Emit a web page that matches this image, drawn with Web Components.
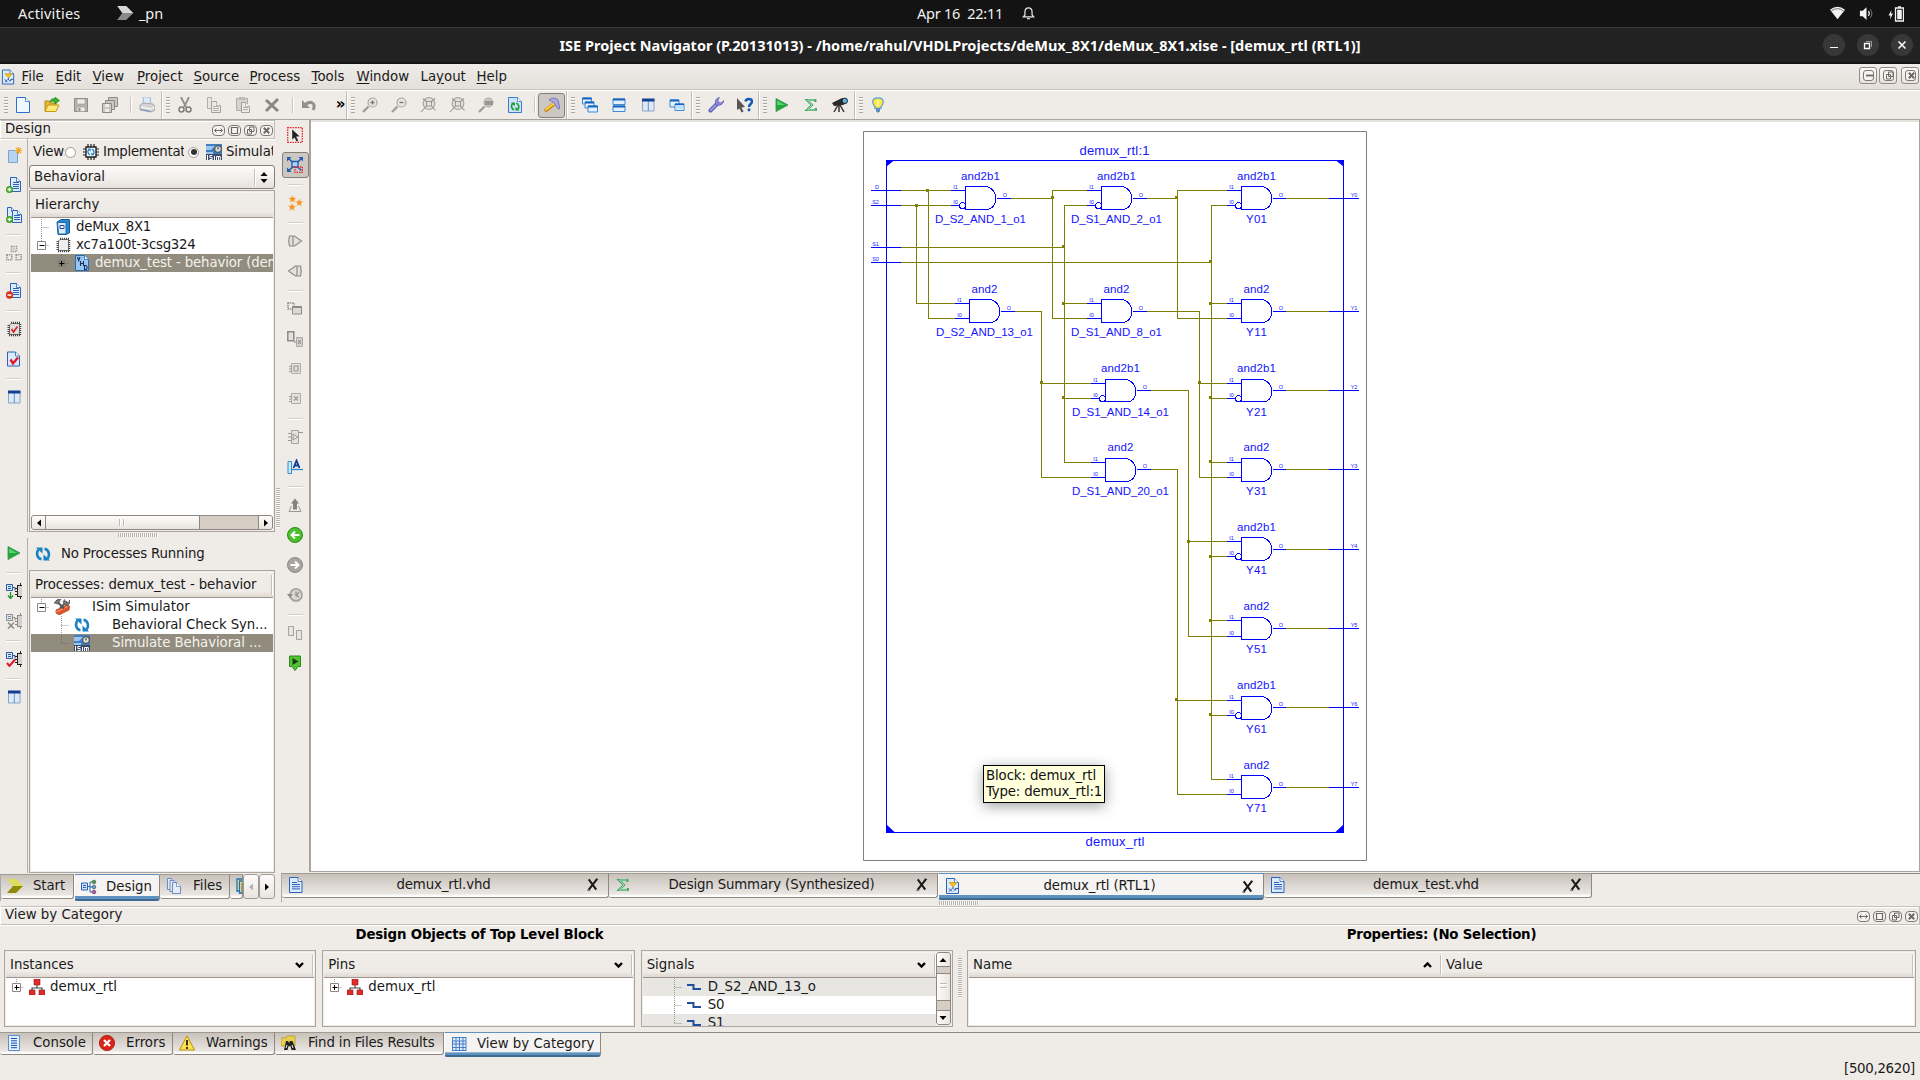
<!DOCTYPE html>
<html lang="en">
<head>
<meta charset="utf-8">
<title>ISE Project Navigator</title>
<style>
html,body{margin:0;height:100%;overflow:hidden;background:#efebe7}
body{font:13.33px/18px "DejaVu Sans",sans-serif;color:#1a1a1a}
</style>
</head>
<body>
<ise-app></ise-app>
<script>
const define = (name, html, init) => customElements.define(name, class extends HTMLElement {
  constructor() { super(); this.attachShadow({ mode: 'open' }); }
  connectedCallback() {
    this.shadowRoot.innerHTML = typeof html === 'function' ? html(this) : html;
    if (init) init(this);
  }
});

/* ---------- icon library, 16 x 16 grid ---------- */
const B = '#2a62b8', G = '#8e8b87';
const page = (x, y, w, h, s = B, f = '#dcebfb') => `<path d="M${x} ${y}h${w - 4}l4 4v${h - 4}h-${w}z" fill="${f}" stroke="${s}"/><path d="M${x + w - 4} ${y}v4h4" fill="#fff" stroke="${s}" stroke-width=".8"/>`;
const lines = (x, y, w, n, c = B, d = 2) => Array.from({ length: n }, (_, i) => `<path d="M${x} ${y + i * d}h${w}" stroke="${c}"/>`).join('');
const proc = (c) => `<path d="M.5 1.5h6v6h-6z" fill="#d8e8fa" stroke="${c}"/><path d="M2 3.5h3M2 5.5h3M7 4.5h2v3" stroke="${c}" fill="none"/><path d="M11 2.500h5M11 13.500h5M11.500 2v12M9 5.500h2M9 8.500h2M9 11.500h2M14.500 0v2M14.500 14v2" stroke="${c === G ? G : '#222'}" fill="none"/><path d="M12 3h4v10h-4z" fill="#d4d2d0"/>`;
const cyc = (c, t = '') => `<g ${t} fill="none" stroke="${c}" stroke-width="2.600"><path d="M6.500 13.200C2 12.500.8 7 3.500 3.500"/><path d="M9.500 2.800C14 3.500 15.200 9 12.500 12.500"/></g><g ${t} fill="${c}"><path d="M1 1.500h6.500v6z"/><path d="M15 14.500H8.500v-6z"/></g>`;
const lens = `<path d="M1 15l5.500-5.500" stroke="#a19e9a" stroke-width="2.400"/><circle cx="10.500" cy="5.500" r="4.500" fill="#e6e4e1" stroke="#aaa7a3" stroke-width="1.200"/>`;
const chip = (c, f = '#dedede') => `<path d="M5 2.500h8.500v11h-10V4z" fill="${f}" stroke="${c}" stroke-width=".7"/><path d="M5 1.800h9M3 14.200h11M2.500 4v10M14.300 3v11" fill="none" stroke="${c}" stroke-width="2" stroke-dasharray="1.100 .9"/>`;
const isim = `<path d="M0 0h16v11H0z" fill="#3f7fc4"/><path d="M0 2h9l-4 4H0zM0 8h7v2H0z" fill="#9cc6ee"/><circle cx="12" cy="5" r="3.300" fill="#ddd" stroke="#555" stroke-width="1.200"/><path d="M12 3v2.500" stroke="#333"/><path d="M0 10h16v6H0z" fill="#3a4a66"/><path d="M1.500 11v5M6.500 11.500H3.800v2h2.400v2H3.500M8.500 12v4M10.500 16v-3.500h3.800V16M12.500 12.500V16" stroke="#fff" fill="none"/>`;
const win = (x, y, w, h) => `<path d="M${x} ${y}h${w}v${h}h-${w}z" fill="#e4f0fc" stroke="#2a7fd0" stroke-width=".9"/><path d="M${x} ${y + .5}h${w}" stroke="#1565c0" stroke-width="2"/>`;
const gate = (c) => `<path d="M2.500 3h5L14.500 8l-7 5h-5q-1.500-5 0-10zM6 3.500v9" fill="#e3e1de" stroke="${c}" stroke-width="1.200"/>`;
const plusdot = `<circle cx="3.500" cy="12.500" r="3.500" fill="#36a41c"/><path d="M1.500 12.500h4M3.500 10.500v4" stroke="#fff" stroke-width="1.300"/>`;
const icons = {
  app: page(1.5, .5, 12, 15) + `<path d="M4 4.500h8L8 9z" fill="#f2c021" stroke="#c79000" stroke-width=".6"/><path d="M8 9v2M4 10.500l3 3M7 10.500l-3 3M8.500 12h2v-1.500h2.500" stroke="#2350a8" fill="none"/>`,
  new: page(1.500, .5, 13, 15, '#2f6fd0', '#f1f7fe'),
  open: `<path d="M1 14V4h4l1 2h6v8z" fill="#e0b83c" stroke="#b8860b"/><path d="M1 14.500L4 8h11l-3 6.500z" fill="#ffe97a" stroke="#c79a18"/><path d="M6 5c0-3 3-4 5-3V0l4.500 3.500L11 7V5C9 4 8 4 6 5z" fill="#35b02a" stroke="#1d7d17" stroke-width=".6"/>`,
  save: `<path d="M1.500 1.500h13v13h-13z" fill="#b6b3af" stroke="${G}"/><path d="M4 2h8v5H4zM4 10h8v4.500H4z" fill="#efebe7" stroke="#999" stroke-width=".6"/><path d="M5.500 11h2v3h-2z" fill="${G}"/>`,
  saveall: `<g fill="#cac7c3" stroke="${G}"><path d="M6.500.5h9v9h-9z"/><path d="M3.500 3.500h9v9h-9z"/><path d="M.5 6.500h9v9h-9z"/></g><path d="M3 7h4v3H3zM3 12h4v3H3z" fill="#efebe7"/>`,
  print: `<path d="M4 0h7l1 8H5z" fill="#dcebfb" stroke="#9fb8d8"/><path d="M1 8l3-2 10 1 2 2v4l-4 2-11-2z" fill="#d6d4d2" stroke="#aaa"/><path d="M2 10l10 2 3-1.500" stroke="#fff" fill="none"/><path d="M2 12.500l10 2" stroke="#6f9ad0"/>`,
  cut: `<path d="M4 0l5 10M12 0L7 10" stroke="#92908c" stroke-width="1.800"/><circle cx="4.500" cy="12.500" r="2.500" fill="none" stroke="#807d79" stroke-width="1.500"/><circle cx="11.500" cy="12.500" r="2.500" fill="none" stroke="#807d79" stroke-width="1.500"/>`,
  copy: page(1.500, .5, 8, 11, '#b0ada9', '#e8e6e3') + page(5.500, 4.500, 9, 11, '#a5a29e', '#eceae7') + lines(7, 9.500, 6, 3, '#b5b2ae'),
  paste: `<path d="M1.500 1.500h11v12h-11z" fill="#d5d2ce" stroke="#b0ada9"/><path d="M4 0h6v3H4z" fill="#c0bdb9"/>` + page(6.500, 5.500, 8, 10, '#a5a29e', '#eceae7') + lines(8, 10.500, 5, 2, '#b5b2ae'),
  del: `<path d="M2 3l12 11M14 2L2 14" stroke="#8b8884" stroke-width="3"/>`,
  undo: `<path d="M4 8c5-5 12-2 8 5" fill="none" stroke="#92908c" stroke-width="3"/><path d="M1 3v8h8z" fill="#92908c"/>`,
  zin: lens + `<path d="M8.500 5.500h4M10.500 3.500v4" stroke="#777" stroke-width="1.300"/>`,
  zout: lens + `<path d="M8.500 5.500h4" stroke="#777" stroke-width="1.300"/>`,
  fit: `<circle cx="9" cy="6.500" r="5.800" fill="#e4e2de" stroke="#aaa7a3" stroke-width="1.300"/><path d="M6.500 4.500h5v4.500h-5zM3 1.500l3.500 3M15 1.500l-3.500 3M1 15l5.500-6M15.500 13.500l-4-4.500" stroke="#9a9793" stroke-width="1.100" fill="none"/>`,
  zsel: `<path d="M1 15l5.500-5.500" stroke="#a19e9a" stroke-width="2.400"/><circle cx="10.500" cy="5.500" r="4.500" fill="#c9c6c2" stroke="#aaa7a3"/><path d="M7 4h8v4H7z" fill="#9a9793"/>`,
  refresh: page(1.500, .5, 13, 15, '#3b78cf', '#cfe4fb') + cyc('#189a2c', 'transform="translate(3.200 4.500) scale(.62)"'),
  hammer: `<path d="M1 14L10 7" stroke="#c8860a" stroke-width="3.600"/><path d="M1.500 13L10 6.500" stroke="#ffd24a" stroke-width="1.600"/><path d="M5 3c3-3 7-2 9 0l2 9-2.500-.5L11 7 9 5z" fill="#a9a8e0" stroke="#6c6ab0" stroke-width=".8"/>`,
  cascade: win(.5, 1, 9, 6) + win(3, 5, 9, 6) + win(6, 9, 9.500, 6),
  tileh: win(2, 2, 12, 5.500) + win(2, 9, 12, 5.500),
  tilev: `<path d="M2.500 2.500h11.500v11.500H2.500z" fill="#dfe9f5" stroke="#8aa5c8"/><path d="M8.300 3v11" stroke="#5f8fcf"/><path d="M2 1.500h12.500v3H2z" fill="#123f96"/>`,
  winr: win(1, 3, 9, 7) + win(6, 7, 9, 6.500) + `<path d="M6.500 8h8v4h-8z" fill="#bfe0fb"/>`,
  wrench: `<path d="M2.500 13.500L9 7" stroke="#5a58b4" stroke-width="4" stroke-linecap="round"/><path d="M2.700 13.300L9 7" stroke="#9a99e6" stroke-width="2" stroke-linecap="round"/><path d="M11.500.5C8 1 6.500 4 8 7.500c3.500 1.800 7 .5 7.800-4L13 6l-2.500-.5L10 3z" fill="#8a89dc" stroke="#5a58b4" stroke-width=".7"/>`,
  help: `<path d="M0 1l8 9-3.500.5 2 4-2 1-2-4L0 13z" fill="#555"/><path d="M8.500 4.500C9 1 15 1 15 4.500c0 2.500-3 2.500-3 5.500" fill="none" stroke="#1257b8" stroke-width="2.500"/><path d="M10.700 11.500h2.600v2.700h-2.600z" fill="#1257b8"/>`,
  play: `<path d="M2 1.500L14 8 2 14.500z" fill="#1faa3c" stroke="#3c8c4c" stroke-width=".8"/><path d="M3 3.500L11 8H3z" fill="#5fd070"/>`,
  sigma: `<path d="M12.300 5V3H4l5 5-5 5h8.800v-2" fill="none" stroke="#3fa563" stroke-width="2.200"/><path d="M11.800 3H4.500L9 8l-4.500 5h8" fill="none" stroke="#c4ecd0" stroke-width=".8"/>`,
  scope: `<path d="M0 6l10-5 4 1 1 4-4 2-9 1z" fill="#2b2b2b"/><circle cx="12.800" cy="3.800" r="2.700" fill="#54b7ea" stroke="#222"/><path d="M6 8l-4 7M7 8v7M8 8l4 7" stroke="#333" stroke-width="1.500"/>`,
  bulb: `<path d="M8 .8c7 0 6 6 3 9v1.500H5V9.800C2 6.800 1 .8 8 .8z" fill="#ffe73e" stroke="#4a9fe0" stroke-width="1.200"/><path d="M6 11h4v3.500L8 15.700 6 14.500z" fill="#5a8cc8"/><path d="M8 3v6" stroke="#fff8b0" stroke-width="2"/>`,
  newsrc: `<path d="M2.500 3.500h9v12h-9z" fill="#b8d4f2" stroke="#7da3d3"/><path d="M12.500 0v7M9 3.500h7M10 1l5 5M15 1l-5 5" stroke="#f5a623" stroke-width="1.200"/>`,
  addsrc: page(4.500, .5, 10, 14) + lines(7, 5.500, 6, 4) + plusdot,
  addcopy: page(1.500, .5, 8, 11) + page(6.500, 3.500, 9, 12) + lines(8, 8.500, 6, 3) + plusdot,
  remsrc: page(4.500, .5, 10, 14) + lines(7, 5.500, 6, 4) + `<circle cx="3.500" cy="12" r="3.700" fill="#d9301a"/><path d="M1.500 12h4" stroke="#fff" stroke-width="1.500"/>`,
  hier: `<g fill="none" stroke="#9a9793" stroke-width="1.600" stroke-dasharray="1.300 .8"><path d="M5.500 1.500h5v5h-5zM.8 9.800h5v5h-5zM10.200 9.800h5v5h-5z"/></g><path d="M7 3h2v2H7z" fill="#ccc"/>`,
  chipcheck: chip('#444') + `<path d="M5.500 8l2 3 4-5.500" stroke="#e02020" stroke-width="1.600" fill="none"/>`,
  chip: chip('#444', '#eee'),
  doccheck: page(1.500, 1, 12, 14, B) + `<path d="M4.500 8.500l2.500 4 5-6" stroke="#e0182a" stroke-width="2.400" fill="none"/>`,
  select: `<path d="M.7.7h14.600v14.600H.7z" fill="none" stroke="#e8222a" stroke-width="1.300" stroke-dasharray="1.500 1"/><path d="M5 2l8 7.500-3.500.3 2 4-2 1-2-4L5 13z" fill="#222" stroke="#fff" stroke-width=".4"/>`,
  zoomfit: `<path d="M1.500 1.500l13 12M14.500 1.500l-13 12.500" stroke="#1f5bb0" stroke-width="1.500"/><path d="M5 4.500h6v5.500H5z" fill="#b5d2f3" stroke="#1f5bb0" stroke-width="1.300"/><path d="M0 0h4.500L0 4.500zM16 0v4.500L11.500 0zM0 15v-4.500L4.500 15z" fill="#1f5bb0"/><path d="M8 10h7.500v5.500H8z" fill="none" stroke="#e8222a" stroke-width="1.300" stroke-dasharray="1.500 1"/>`,
  stars: `<g fill="#f79421" stroke="#fbc27c" stroke-width=".4"><path d="M5.500.5l1.100 2.300 2.500.3-1.900 1.700.5 2.600-2.200-1.300-2.300 1.300.5-2.600L1.800 3.100l2.600-.3z"/><path d="M12.300 4l1.100 2.300 2.500.3-1.900 1.700.5 2.600-2.200-1.300-2.300 1.300.5-2.600-1.900-1.700 2.600-.3z"/><path d="M5 8.500l1.100 2.300 2.500.3-1.900 1.700.5 2.600L5 14.100l-2.300 1.300.5-2.600-1.900-1.700 2.600-.3z"/></g>`,
  gatef: gate(G),
  gateb: `<g transform="matrix(-1 0 0 1 16 0)">${gate(G)}</g>`,
  winchip: `<path d="M1 2h6v6H1z" fill="none" stroke="${G}" stroke-width="1.600" stroke-dasharray="1.300 .8"/><path d="M5.500 5.500h9v7.500h-9z" fill="#dedbd7" stroke="${G}"/><path d="M5.500 6h9" stroke="${G}" stroke-width="2"/>`,
  boxchip: `<path d="M.8.800h6v9h-6z" fill="#e4e2df" stroke="${G}" stroke-width="1.500"/><path d="M9.500 6.500h6v9h-6z" fill="#d4d1cd" stroke="#aaa"/><path d="M11 9l3 4M14 9l-3 4M7 11h2" stroke="${G}"/>`,
  port: `<path d="M4.500 2.500h9v10h-9z" fill="#e4e2df" stroke="#b0ada9"/><path d="M7 5h4v5H7zM2 5.500h3M2 8h3M2 10.500h3" fill="none" stroke="#9a9793" stroke-width="1.200"/>`,
  portx: `<path d="M4.500 2.500h9v10h-9z" fill="#e4e2df" stroke="#b0ada9"/><path d="M7 5.500l4 4M11 5.500l-4 4M2 5.500h3M2 8h3M2 10.500h3" fill="none" stroke="#9a9793" stroke-width="1.200"/>`,
  buf: `<path d="M4.500 1.500h7v13h-7z" fill="#e4e2df" stroke="#a5a29e"/><path d="M6 5l5 3-5 3zM1 4.500h3M1 8h3M1 11.500h3M12 3.500h4" fill="none" stroke="#9a9793"/>`,
  label: `<path d="M1 2.500h3.500v12H1z" fill="#cfe8fc" stroke="#2a8fd8"/><path d="M5 10.500h11" stroke="#2a8fd8" stroke-width="1.300"/><path d="M6.500 9L9.500 1.500 12.500 9M7.500 6.500h4" stroke="#123f96" stroke-width="1.800" fill="none"/>`,
  up: `<path d="M8 1.500l4 5h-2v6H6v-6H4z" fill="#85827d"/><path d="M4.500 9L2 14.500h12L11.500 9" fill="none" stroke="#9a9793"/>`,
  prev: `<circle cx="8" cy="8" r="7.500" fill="#4cc02c" stroke="#2c8a1a"/><path d="M12.500 8H5M8 4.500L4.500 8 8 11.500" stroke="#fff" stroke-width="2" fill="none"/>`,
  next: `<circle cx="8" cy="8" r="7.500" fill="#a8a5a1" stroke="#8b8884"/><path d="M3.500 8H11M8 4.500L11.500 8 8 11.500" stroke="#fff" stroke-width="2" fill="none"/>`,
  hist: `<circle cx="9" cy="8" r="6" fill="#dad7d3" stroke="#a8a5a1" stroke-width="1.800"/><path d="M0 7h6l-3 4z" fill="${G}"/><path d="M9 4.500V8.500L12 10M12 5l-2 3" stroke="${G}" stroke-width="1.300" fill="none"/>`,
  two: `<path d="M1.500 1.500h5v9h-5zM9.500 5.500h5v9h-5z" fill="#e8e6e3" stroke="#a5a29e"/>`,
  mark: `<path d="M2.500 1h11v10.500H11L8 15.500 5 11.500H2.500z" fill="#52c433" stroke="#2c8a1a"/><path d="M5.500 3l6 3.500-6 3.500z" fill="#1a3a14"/>`,
  procrun: proc('#2a5aa0') + `<path d="M4.500 9v6M2 12.500l2.500 3 2.500-3" stroke="#1c9a2c" stroke-width="1.300" fill="none"/>`,
  procstop: proc(G) + `<path d="M2 9.500l6 6M8 9.500l-6 6" stroke="${G}" stroke-width="1.600"/>`,
  proccheck: proc('#2a5aa0') + `<path d="M1 12l2.500 3L9 8.500" stroke="#e0182a" stroke-width="2" fill="none"/>`,
  impl: `<path d="M3 3h10v10H3z" fill="#fff" stroke="#222" stroke-width="1.400"/><path d="M5 0v3M8 0v3M11 0v3M5 13v3M8 13v3M11 13v3M0 5h3M0 8h3M0 11h3M13 5h3M13 8h3M13 11h3" stroke="#222" stroke-width="1.200"/>` + cyc('#1a86c8', 'transform="translate(3.800 3.800) scale(.52)"'),
  isim,
  proj: `<path d="M2 3l4-2.500h8.500V14L11 15.500H3z" fill="#2a86c8" stroke="#1a5f9c"/><path d="M2.500 3.500H11V15H3.500z" fill="#d9ecfa" stroke="#1a6fb0"/><path d="M5 6.500h4v3H5z" fill="#fff" stroke="#2a4aa0"/>`,
  vhd: page(1.500, .5, 13, 15, '#1a6fc0', '#9cc6f0') + `<path d="M3.500 2l1.200 3.500L6 2M6.500 6v5M9.500 6v5M6.500 8.500h3M10.500 10.500v4h1.500c1.500 0 1.500-4 0-4z" stroke="#12305c" stroke-width="1.100" fill="none"/>`,
  cyc: cyc('#1a80c4'),
  tools: `<path d="M2 11l11-5 2.500 1-.5 4L5 16l-3-2z" fill="#e2552c" stroke="#a83a1a" stroke-width=".7"/><path d="M2 13l12-5.500" stroke="#f59a78"/><path d="M2 1.500l8 8M13 2.500L6 9" stroke="#555" stroke-width="1.800"/><path d="M0 4l4-4h3L4 5zM10.500.5l1 2.500 3 1 1-3 .5 3-2.500 2.500-3-1L9 3z" fill="#777" stroke="#444" stroke-width=".6"/>`,
  start: `<path d="M0 1h9l7 7H6z" fill="#dede5a"/><path d="M0 15h9l7-7H6z" fill="#8c8c08"/>`,
  design: `<path d="M.5 4h6v7h-6z" fill="#cfe2fa" stroke="${B}"/><path d="M2 6.500h3M2 8.500h3M6.500 7.500h2.500M9 3v10M9 3h2M9 13h2M9 8h2" stroke="${B}" fill="none"/><circle cx="13" cy="3" r="1.800" fill="#45b04a" stroke="#333" stroke-width=".6"/><circle cx="13" cy="8" r="1.800" fill="#59a9e8" stroke="#333" stroke-width=".6"/><circle cx="13" cy="13" r="1.800" fill="#c255b8" stroke="#333" stroke-width=".6"/>`,
  files: page(1.500, .5, 8, 11, '#6a8cc0', '#e4ecf6') + page(4, 2.500, 8, 11, '#6a8cc0', '#e4ecf6') + page(6.500, 4.500, 8, 11, '#6a8cc0', '#e4ecf6'),
  libs: `<path d="M1 1h10v12H1z" fill="#ffe670" stroke="#1a6fc0" stroke-width="1.300"/><path d="M3.500 3h10v12h-10z" fill="#ffe670" stroke="#1a6fc0" stroke-width="1.300"/><path d="M6 5h9v11H6z" fill="#dcebfb" stroke="#1a6fc0"/>`,
  doc: page(1.500, .5, 12.500, 15) + lines(4, 5.500, 5, 1) + lines(4, 7.500, 8, 3, B, 2.200),
  mod: `<path d="M5 0h6v6H5zM0 11h6v5H0zM10 11h6v5h-6z" fill="#e02b2b" stroke="#a01414" stroke-width=".6"/><path d="M8 6v3M3 11V9h10v2" stroke="#444" fill="none" stroke-width="1.200"/>`,
  net: `<path d="M0 6h6.500v4h7.500" stroke="#1f4f9c" stroke-width="2" fill="none"/>`,
  console: `<path d="M2.500.5h11v15h-11z" fill="#e4f0fc" stroke="#5a8fd0"/>` + lines(5, 3.500, 6, 5, '#1f4fb0', 2.300),
  error: `<circle cx="8" cy="8" r="7.600" fill="#dc2418" stroke="#a01408" stroke-width=".8"/><path d="M5 5l6 6M11 5l-6 6" stroke="#fff" stroke-width="2.300"/>`,
  warn: `<path d="M8 .8L15.500 15H.5z" fill="#ffe24a" stroke="#b89010"/><path d="M8 5v5.500M8 12v2" stroke="#222" stroke-width="1.800"/>`,
  find: `<path d="M0 3h5l1-2h8v10H0z" fill="#e8cf50" stroke="#b59a20" stroke-width=".8"/><path d="M3 15l2-9h2l1 2 1-2h2.500L15 15h-4.500l-1-4h-2L6.500 15z" fill="#222"/><path d="M5 13l1-3M12 13l-1-3" stroke="#eee"/>`,
  grid: `<path d="M1 1.500h14v13H1z" fill="#dcebfc"/><path d="M1.500 1v14M5 1v14M8.500 1v14M12 1v14M15 1v14M1 1.500h14M1 5h14M1 8h14M1 11.500h14M1 14.500h14" stroke="#3f74c4" stroke-width=".9"/>`,
  pn: `<path d="M0 0h9l7 7H5z" fill="#d8d8d8"/><path d="M0 14h9l7-7H5z" fill="#8a8a8a"/>`,
  bell: `<path d="M2.500 11.500h11l-1.700-2V6.500C11.800 3 10 2 8 2S4.200 3 4.200 6.500v3zM6.500 13.500h3" fill="none" stroke="#e8e8e8" stroke-width="1.300"/>`,
  wifi: `<path d="M0 4q8-6.500 16 0L8 14z" fill="#f2f2f2"/><path d="M1.500 5.200q6.500-4.700 13 0" fill="none" stroke="#555" stroke-width=".9"/>`,
  vol: `<path d="M1 5h3l4-3.800v13.600L4 11H1z" fill="#f2f2f2"/><path d="M10 5.500q2 2.500 0 5" stroke="#eee" fill="none" stroke-width="1.300"/><path d="M12 3.500q3.500 4.500 0 9" stroke="#888" fill="none"/>`,
  batt: `<path d="M7.500 2h8v13h-8z" fill="none" stroke="#f2f2f2" stroke-width="1.300"/><path d="M10 .3h3v1.700h-3zM9.200 3.700h4.600v9.600H9.200z" fill="#f2f2f2"/><path d="M3.500 4L.5 9.500h2l-.5 4L5 7.500H3z" fill="#f2f2f2"/>`,
  close: `<path d="M4 2.500l8 11M13 2L4 13.500" stroke="#1a1a1a" stroke-width="2.200"/><path d="M2.500 14h3M11 2.500h3" stroke="#333"/>`
};
icons.table = icons.tilev;
define('ise-icon', el => `<style>:host{display:block;flex:none;width:16px;height:16px}svg{display:block;width:100%;height:100%}</style><svg viewBox="0 0 16 16">${icons[el.getAttribute('name')] || ''}</svg>`);

/* text run justified to a given advance width */
define('fit-text', `<style>:host{display:inline-block;white-space:pre}</style><span><slot></slot></span>`, el => {
  const w = +el.getAttribute('w'), n = el.textContent.length;
  const now = el.shadowRoot.querySelector('span').getBoundingClientRect().width;
  if (w && now) el.style.letterSpacing = ((w - now) / n).toFixed(3) + 'px';
});
const T = (w, s) => `<fit-text w="${w}">${s}</fit-text>`;

/* ---------- desktop chrome ---------- */
define('top-bar', `<style>
:host{display:grid;grid-template-columns:1fr 126px 1fr;height:27px;background:#131313;color:#f0f0f0;font:14.500px/26px "Noto Sans","Open Sans",sans-serif;box-sizing:border-box}
.l,.c,.r{display:flex;align-items:center}fit-text{margin-top:-2px}.l{padding-left:18px}.r{justify-content:flex-end;gap:14px;padding-right:16px}
.l ise-icon{width:16.500px;height:16px;margin:0 6px 0 36px}.c{gap:18px;padding-left:20px}.c ise-icon{width:15px;height:15px}
.r ise-icon{width:15px;height:15px}
</style><div class="l">${T(62.5, 'Activities')}<ise-icon name="pn"></ise-icon>${T(24, '_pn')}</div>
<div class="c">${T(86, 'Apr 16  22:11')}<ise-icon name="bell"></ise-icon></div>
<div class="r"><ise-icon name="wifi"></ise-icon><ise-icon name="vol"></ise-icon><ise-icon name="batt" style="width:16px;height:16px"></ise-icon></div>`);

define('title-bar', `<style>
:host{display:flex;align-items:center;position:relative;height:37px;box-sizing:border-box;border-top:1px solid #3a3a3a;border-bottom:2px solid #141414;background:#222;color:#fff;font:bold 14.500px/34px "Noto Sans","Open Sans",sans-serif}
.t{flex:1;text-align:center;padding-left:157px}.b{display:flex;gap:12px;padding-right:7px;width:150px;justify-content:flex-end}
i{width:22px;height:22px;border-radius:11px;background:#383838;display:grid;place-items:center}svg{width:10px;height:10px;fill:none;stroke:#fff}
</style><div class="t">${T(801, 'ISE Project Navigator (P.20131013) - /home/rahul/VHDLProjects/deMux_8X1/deMux_8X1.xise - [demux_rtl (RTL1)]')}</div>
<div class="b"><i><svg viewBox="0 0 10 10"><path d="M1 7.500h8"/></svg></i><i><svg viewBox="0 0 10 10"><path d="M1.500 3.500h5v5h-5z" stroke-width="1.300"/><path d="M3 1.500h5.500V7" stroke="#999"/></svg></i><i><svg viewBox="0 0 10 10"><path d="M1.500 1.500l7 7M8.500 1.500l-7 7" stroke-width="1.500"/></svg></i></div>`);

const glyph = {
  min: '<path d="M2 5.500h7" stroke-width="1.800"/>',
  span: '<path d="M1.500 5.500h8M3.500 3.500l-2 2 2 2M7.500 3.500l2 2-2 2"/>',
  max: '<path d="M2.500 2.500h6v6h-6z" stroke-width="1.200"/>',
  rest: '<path d="M4.500 2h4.500v4.500H4.500zM2.500 4.500h4V9h-4z"/>',
  x: '<path d="M2.800 2.800l5.400 5.400M8.200 2.800L2.800 8.200" stroke-width="2"/>'
};
define('round-btn', el => `<style>:host{display:block;flex:none;width:11px;height:9px;border:1px solid #7d7873;border-radius:4px;background:#f6f4f2}svg{display:block;width:11px;height:9px;fill:none;stroke:#6d6863}</style><svg viewBox="0 1 11 9">${glyph[el.getAttribute('g')]}</svg>`);

define('menu-bar', `<style>
:host{display:flex;height:26px;box-sizing:border-box;border-bottom:1px solid #c9c5c1;background:linear-gradient(#efede9,#e3dfda);align-items:center;padding:0 1px}
ise-icon{margin-right:5.500px;width:15px}nav{display:flex;flex:1}span{display:block;white-space:nowrap;line-height:22px;padding-top:1px}u{text-underline-offset:2px}
.b{display:flex;gap:2px;margin-top:-3px}.b i:last-child{margin-left:2px}.b i{width:16px;height:15px;border:1px solid #948c86;border-radius:3px;display:grid;place-items:center;background:linear-gradient(#fbfaf9,#e8e2dd)}
round-btn{width:9px;border-radius:3px}
</style><ise-icon name="app"></ise-icon><nav>${[['<u>F</u>ile', 34], ['<u>E</u>dit', 37], ['<u>V</u>iew', 44.500], ['<u>P</u>roject', 56.500], ['<u>S</u>ource', 56], ['<u>P</u>rocess', 62], ['<u>T</u>ools', 45], ['<u>W</u>indow', 64], ['La<u>y</u>out', 56], ['<u>H</u>elp', 40]].map(([t, w]) => `<span style="width:${w}px">${t}</span>`).join('')}</nav>
<div class="b"><i><round-btn g="min"></round-btn></i><i><round-btn g="rest"></round-btn></i><i><round-btn g="x"></round-btn></i></div>`);

define('tool-bar', `<style>
:host{display:flex;height:30px;box-sizing:border-box;border-top:1px solid #fff;border-bottom:1px solid #aaa49e}
.g{display:flex;align-items:center;box-sizing:border-box;border-right:1px solid #c2bcb6;box-shadow:1px 0 #fff;flex:none}.g>*{flex:none}
.h{width:4px;height:16px;margin:0 .5px 0 4px;background:repeating-linear-gradient(#aaa6a2 0 1px,#fbfaf9 1px 2px,#efebe7 2px 3px)}
.b{width:29px;display:grid;place-items:center}.b.on{width:25px;height:23px;margin:0 0 0 1px;border:1px solid #857f79;border-radius:3px;background:#cdc7c1}
.s{width:1px;height:16px;margin:0 2px 0 5px;background:#c9c5c1;box-shadow:1px 0 #fff}.m{margin-left:11px;font-weight:bold;font-size:15px;width:12px;text-align:center;color:#000;line-height:16px;margin-top:-2px}
</style>${[[162, 'new open save saveall | print'], [184.5, 'cut copy paste del | undo »'], [220.5, 'zin zout fit fit zsel refresh | *hammer'], [124.5, 'cascade tileh tilev winr'], [67, 'wrench help', 1.5], [96.5, 'play sigma scope']].map(([w, s, lead = 0]) => `<div class="g" style="width:${w}px"><div class="h" style="margin-right:${.5 + lead}px"></div>` + s.split(' ').map(n => n === '|' ? '<div class="s"></div>' : n === '»' ? '<div class="m">»</div>' : `<div class="b${n[0] === '*' ? ' on' : ''}"><ise-icon name="${n.replace('*', '')}"></ise-icon></div>`).join('') + '</div>').join('')}<div class="g" style="border:0;box-shadow:none"><div class="h"></div><div class="b"><ise-icon name="bulb"></ise-icon></div></div>`);

/* vertical icon strip; "|" is a separator, "*" marks a pressed button */
define('icon-strip', el => `<style>:host{display:flex;flex-direction:column;align-items:center;box-sizing:border-box}
.b{height:30px;display:grid;place-items:center;flex:none}.on{height:24px;width:25px;margin:2px 0;border:1px solid #857f79;border-radius:3px;background:#cdc7c1}
.s{height:1px;width:15px;margin:4px 0 2px;border-top:1px solid #d3cfcb;background:#fff;flex:none}</style>
${el.getAttribute('icons').split(' ').map(n => n === '|' ? '<div class="s"></div>' : `<div class="b${n[0] === '*' ? ' on' : ''}"><ise-icon name="${n.replace('*', '')}"></ise-icon></div>`).join('')}`);

define('dock-title', `<style>:host{display:flex;align-items:center;justify-content:space-between;box-sizing:border-box;height:19px;border:1px solid #c4bfba;border-left-color:#fff;padding:0 0 0 4px;box-shadow:inset 0 1px #fff,0 1px #fff}
.b{display:flex;gap:3px;padding-right:1px;padding-top:1px}span{line-height:16px;margin-top:-2px}</style><span><slot></slot></span><div class="b"><round-btn g="span"></round-btn><round-btn g="max"></round-btn><round-btn g="rest"></round-btn><round-btn g="x"></round-btn></div>`);

define('col-head', el => `<style>:host{display:flex;align-items:center;height:26px;box-sizing:border-box;border-bottom:1px solid #9c948e;background:linear-gradient(#efebe7 78%,#dfd8d2);padding-left:4px;box-shadow:inset 0 1px #f6f4f2}
span{flex:1;white-space:nowrap}i{width:1px;height:20px;background:#c4bfba;box-shadow:1px 0 #fff;margin-right:1px}svg{width:9px;height:8px;margin-right:8px}</style>
<span><slot></slot></span>${el.hasAttribute('arrow') ? `<svg viewBox="0 0 9 8"><path d="${el.getAttribute('arrow') === 'up' ? 'M1 6l3.500-3.500L8 6' : 'M1 2l3.500 3.500L8 2'}" fill="none" stroke="#000" stroke-width="2.400"/></svg>` : ''}${el.hasAttribute('nodiv') ? '' : '<i></i>'}`);

/* tree row: branch art occupies "indent" pixels before the icon */
define('tree-row', el => {
  const x = +el.getAttribute('x'), box = el.getAttribute('box'), ind = +el.getAttribute('indent'), up = el.getAttribute('up') ?? 1, down = el.hasAttribute('down');
  const tone = el.hasAttribute('sel') ? '#6f6b60' : '#9c9894';
  return `<style>:host{display:flex;height:18px;align-items:center;white-space:nowrap;overflow:hidden}
:host([sel]){background:#918c7d;color:#f4f2ee}:host([alt]){background:#e8e6e3}svg{flex:none;height:18px;width:${ind}px}span{margin-left:${el.getAttribute('gap') || 5}px;line-height:18px}</style>
<svg viewBox="0 0 ${ind} 18"><path d="M${x + .5} ${up}V${down ? 18 : 9}M${x + .5} 9.500h8" stroke="${tone}" stroke-dasharray="1 1" fill="none"/>${box ? `<path d="M${x - 3.5} 5.500h8v8h-8z" fill="${el.hasAttribute('sel') ? '#857f72' : '#fff'}" stroke="#8b8884"/><path d="M${x - 1.500} 9.500h5${box === 'plus' ? `M${x + .5} 7v5` : ''}" stroke="#000" fill="none"/>` : ''}</svg><ise-icon name="${el.getAttribute('icon')}"></ise-icon><span><slot></slot></span>`;
});

define('list-frame', `<style>:host{display:flex;flex-direction:column;box-sizing:border-box;border:1px solid #aca59f;background:#fff;overflow:hidden;box-shadow:inset 0 0 0 1px #efebe7;padding:1px}</style><slot></slot>`);

const arrow = (d, c = '#000') => `<svg viewBox="0 0 8 8" style="width:8px;height:8px;display:block"><path d="${{ l: 'M6 .5L2 4l4 3.500z', r: 'M2 .5L6 4 2 7.500z', u: 'M.5 6L4 2l3.500 4z', d: 'M.5 2L4 6l3.500-4z' }[d]}" fill="${c}"/></svg>`;
define('h-scroll', `<style>:host{display:flex;height:15px;box-sizing:border-box;border:1px solid #8f8882;border-radius:3px;background:#d6cdc5;overflow:hidden}
div{background:linear-gradient(#fdfcfb,#e9e4df);display:grid;place-items:center}.a{width:13px}.k{width:153px;border:solid #8f8882;border-width:0 1px}.r{border-left:1px solid #8f8882;margin-left:auto}
b{width:8px;height:7px;background:repeating-linear-gradient(90deg,#bbb 0 1px,#fff 1px 2px,transparent 2px 4px)}</style><div class="a">${arrow('l')}</div><div class="k"><b></b></div><div class="a r">${arrow('r')}</div>`);
define('v-scroll', `<style>:host{display:flex;flex-direction:column;width:15px;box-sizing:border-box;border:1px solid #8f8882;border-radius:3px;background:#d6cdc5;overflow:hidden}
div{background:linear-gradient(90deg,#fdfcfb,#e9e4df);display:grid;place-items:center}.a{height:13px}.k{height:26px;margin-top:6px;border:solid #8f8882;border-width:1px 0}.u{border-bottom:1px solid #8f8882}.r{border-top:1px solid #8f8882;margin-top:auto}
b{width:7px;height:8px;background:repeating-linear-gradient(#bbb 0 1px,#fff 1px 2px,transparent 2px 4px)}</style><div class="a u">${arrow('u')}</div><div class="k"><b></b></div><div class="a r">${arrow('d')}</div>`);

/* ---------- tabs ---------- */
define('tab-item', el => {
  const x = el.getAttribute('tx');
  return `<style>:host{display:flex;align-items:center;box-sizing:border-box;flex:none;height:25px;width:${el.getAttribute('w')}px;border:1px solid #8f8882;border-left:0;border-top-color:#a09a94;border-radius:0 0 3px 3px;background:linear-gradient(#c9c2bb,#e9e5e1 85%,#fff 95%);padding:0 0 2px 6px;overflow:hidden}
:host([sel]){height:27px;border-top-color:transparent;border-left:1px solid #fff;border-bottom:2px solid #3f6a92;background:linear-gradient(#f6f4f2 88%,#5e92c0 89%);padding-bottom:0}
span{white-space:nowrap;${x ? `margin-left:${x}px` : 'flex:1;text-align:center;margin-right:2px'}}ise-icon.x{width:15px;height:15px;margin-right:8px}</style>
<ise-icon name="${el.getAttribute('icon')}"></ise-icon><span><slot></slot></span>${el.hasAttribute('closable') ? '<ise-icon class="x" name="close"></ise-icon>' : ''}`;
});

/* ---------- RTL schematic ---------- */
define('rtl-schematic', () => {
  const out = [];
  const wire = (d, c = '#808000') => out.push(`<path d="${d}" stroke="${c}" fill="none" shape-rendering="crispEdges"/>`);
  const dot = (x, y) => out.push(`<rect x="${x - 1.5}" y="${y - 1.500}" width="3" height="3" fill="#808000"/>`);
  const text = (x, y, s, w, fs = 11.5) => out.push(`<text x="${x}" y="${y}" font-size="${fs}" text-anchor="middle"${w ? ` textLength="${w}"` : ''}>${s}</text>`);
  wire('M901 190.500H951M928.500 190.500V318.500H955M901 205.500H951M916.500 205.500V303.500H955');
  wire('M901 247.500H1065M1064.500 205V462.500H1091M1064.500 205.500H1087M1064.500 303.500H1087M1064.500 398.500H1091');
  wire('M1011 198.500H1053M1087 190.500H1052.500V318.500H1087M1015 311.500H1041.500V477.500H1091M1041.500 383.500H1091');
  wire('M901 262.500H1212M1227 205.500H1211.500V779.500H1227M1211 303.500H1227M1211 398.500H1227M1211 462.500H1227M1211 556.500H1227M1211 620.500H1227M1211 715.500H1227');
  wire('M1147 198.500H1178M1227 190.500H1177.500V318.500H1227M1147 311.500H1199.500V477.500H1227M1199.500 383.500H1227');
  wire('M1150 390.500H1188.500V636.500H1227M1188.500 541.500H1227M1150 469.500H1177.500V794.500H1227M1177.500 700.500H1227');
  [[927.5, 190.5], [916.5, 205.5], [1063.5, 246.5], [1063.5, 303.5], [1063.5, 397.5], [1052.5, 197.5], [1041.5, 382.5], [1210.5, 261.5], [1210.5, 303.5], [1210.5, 397.5], [1210.5, 461.5], [1210.5, 556.5], [1210.5, 620.5], [1210.5, 714.5], [1176.5, 197.5], [1199.5, 382.5], [1188.5, 541.5], [1176.5, 699.5]].forEach(p => dot(...p));
  [['D', 190.5], ['S2', 205.5], ['S1', 247.5], ['S0', 262.5]].forEach(([n, y]) => { wire(`M871 ${y}H901`, '#00f'); text(n === 'D' ? 877 : 875.5, y - 1.500, n, 0, 5.500); });
  /* left edge, output y, top, bottom, upper input, lower input, inverted, name, name width */
  [[965.5, 198.5, -12, 11, -8, 7, 1, 'D_S2_AND_1_o1', 91], [969.5, 311.5, -12, 11, -8, 7, 0, 'D_S2_AND_13_o1', 97], [1101.5, 198.5, -12, 11, -8, 7, 1, 'D_S1_AND_2_o1', 91], [1101.5, 311.5, -12, 11, -8, 7, 0, 'D_S1_AND_8_o1', 91], [1105.5, 390.5, -11, 11, -7, 8, 1, 'D_S1_AND_14_o1', 97], [1105.5, 469.5, -11, 12, -7, 8, 0, 'D_S1_AND_20_o1', 97],
   [1241.5, 198.5, -12, 11, -8, 7, 1, 'Y01'], [1241.5, 311.5, -12, 11, -8, 7, 0, 'Y11'], [1241.5, 390.5, -11, 11, -7, 8, 1, 'Y21'], [1241.5, 469.5, -11, 12, -7, 8, 0, 'Y31'], [1241.5, 549.5, -12, 11, -8, 7, 1, 'Y41'], [1241.5, 628.5, -11, 11, -8, 8, 0, 'Y51'], [1241.5, 707.5, -11, 12, -7, 8, 1, 'Y61'], [1241.5, 787.5, -12, 11, -8, 7, 0, 'Y71']
  ].forEach(([x, y, t, b, i1, i0, inv, name, w]) => {
    out.push(`<path d="M${x} ${y + t}h20.500q6 1 8.500 6.500q1.500 3 1.500 5.500q0 2.500-1.500 5.500q-2.500 5.500-8.500 ${b - t - 17.5}h-20.500z" fill="#fff" stroke="#00f" shape-rendering="crispEdges"/>`);
    wire(`M${x - 14.500} ${y + i1}H${x}M${x - 14.500} ${y + i0}H${inv ? x - 6 : x}M${x + 31} ${y}H${x + 45}`, '#00f');
    if (inv) out.push(`<circle cx="${x - 3}" cy="${y + i0}" r="3" fill="#fff" stroke="#00f" shape-rendering="crispEdges"/>`);
    text(x - 10, y + i1 - 1.500, 'I1', 0, 5.500); text(x - 10, y + i0 - 1.500, 'I0', 0, 5.500); text(x + 39.500, y - 1.500, 'O', 0, 5.500);
    text(x + 15, y - 18.500, inv ? 'and2b1' : 'and2', inv ? 39 : 26); text(x + 15, y + (i1 === -7 ? 25.5 : 24.5), name, w || 21);
    if (x > 1200) { wire(`M1286 ${y}H1329`); wire(`M1329 ${y}H1359`, '#00f'); text(1354, y - 1.500, 'Y' + name[1], 0, 5.500); }
  });
  return `<style>:host{display:block;position:relative;flex:1;min-height:0;overflow:hidden;background:#fff}svg{display:block;width:1608px;height:750px;font-family:"Liberation Sans",Arial,sans-serif;fill:#1414ff}
.tip{position:absolute;left:672px;top:643px;border:1px solid #000;background:#ffffdc;color:#111;padding:2px;width:116px;height:32px;line-height:16px;white-space:nowrap;box-shadow:0 3px 14px rgba(0,0,0,.38)}</style>
<svg viewBox="311 122 1608 750"><path d="M863.500 131.500H1366.500V860.500H863.500z" fill="none" stroke="#808080"/>
<path d="M886.500 160.500H1343.500V832H886.500z" fill="none" stroke="#00f" shape-rendering="crispEdges"/><path d="M886 160h8.500l-8.500 7zM1344 160h-8.500l8.500 7zM886 832v-8l8.500 8zM1344 832v-8l-8.500 8z" fill="#00f"/>
${out.join('')}<text x="1114.500" y="155" font-size="13" text-anchor="middle" textLength="70">demux_rtl:1</text><text x="1115" y="846" font-size="13" text-anchor="middle" textLength="59">demux_rtl</text></svg>
<div class="tip">${T(110, 'Block: demux_rtl')}<br>${T(116, 'Type: demux_rtl:1')}</div>`;
});

/* ---------- design dock ---------- */
define('design-dock', `<style>
:host{display:flex;flex-direction:column;width:275px;flex:none;height:785px}
.row{display:flex}.strip{width:28px;flex:none;border-right:1px solid #b5aea8;box-sizing:border-box}
.main{flex:1;min-width:0;display:flex;flex-direction:column;padding-left:1px}
.view{height:26px;display:flex;align-items:center;overflow:hidden;padding-left:4px}.view span{overflow:hidden;white-space:nowrap;letter-spacing:-.12px}
.o{width:9px;height:9px;border:1px solid #a09a94;border-radius:6px;background:#fff;flex:none;display:grid;place-items:center}.o b{width:6px;height:6px;border-radius:3px;background:#333}
.combo{height:22px;border:1px solid #857f79;border-radius:3px;background:linear-gradient(#fdfcfb,#e8e3de);display:flex;align-items:center;padding-left:4px;margin-bottom:1px}
.combo span{flex:1}.combo i{width:1px;height:17px;background:#c4bfba;box-shadow:1px 0 #fff;margin-right:5px}.combo div{width:14px;display:flex;flex-direction:column;align-items:flex-start}.combo svg{height:8px!important;margin:-.5px 0}
.grip{height:4px;width:40px;margin:1px auto 1px;background:repeating-linear-gradient(90deg,#b5b1ad 0 1px,#fbfaf9 1px 2px)}
.msg{height:32px;display:flex;align-items:center;padding-left:6px;gap:10px}
.tabs{display:flex;height:27px;align-items:flex-start;margin-top:1px;border-left:1px solid #aaa}
.nav{display:flex}.nav div{width:14px;height:23px;border:1px solid #a09a94;border-radius:3px;background:linear-gradient(#fdfcfb,#e9e4df);display:grid;place-items:center}
</style>
<dock-title>Design</dock-title>
<div class="row" style="height:393px"><icon-strip class="strip" style="padding-top:1px" icons="newsrc addsrc addcopy | hier | remsrc | chipcheck doccheck | table"></icon-strip>
<div class="main"><div class="view"><span style="width:32px">View:</span><div class="o"></div><ise-icon name="impl" style="margin:0 4px 0 7px"></ise-icon><span style="width:81px;letter-spacing:-.3px">Implementation</span><div class="o" style="margin-left:4px"><b></b></div><ise-icon name="isim" style="margin:0 4px 0 7px"></ise-icon><span style="width:47px">Simulation</span></div>
<div class="combo"><span>Behavioral</span><i></i><div>${arrow('u')}${arrow('d')}</div></div>
<list-frame style="height:342px"><col-head nodiv>Hierarchy</col-head>
<tree-row x="10" indent="24" icon="proj" down>${T(75, 'deMux_8X1')}</tree-row><tree-row x="10" indent="24" icon="chip" box="minus" up="0">${T(119.5, 'xc7a100t-3csg324')}</tree-row><tree-row sel x="30" indent="43" icon="vhd" box="plus" style="letter-spacing:-.14px">demux_test - behavior (demux_test.vhd)</tree-row>
<h-scroll style="margin-top:auto;flex:none"></h-scroll></list-frame></div></div>
<div class="grip"></div>
<div class="row" style="height:335px"><icon-strip class="strip" icons="play | procrun procstop | proccheck | table"></icon-strip>
<div class="main"><div class="msg"><ise-icon name="cyc"></ise-icon>${T(143.5, 'No Processes Running')}</div>
<list-frame style="flex:1"><col-head>${T(221.5, 'Processes: demux_test - behavior')}</col-head>
<tree-row x="10" indent="23" icon="tools" box="minus" gap="22">ISim Simulator</tree-row><tree-row x="30" indent="43" icon="cyc" down up="0" gap="22">${T(155.5, 'Behavioral Check Syn...')}</tree-row><tree-row sel x="30" indent="43" icon="isim" gap="22">${T(149.5, 'Simulate Behavioral ...')}</tree-row></list-frame></div></div>
<div class="tabs"><tab-item w="73" icon="start" tx="10">${T(32, 'Start')}</tab-item><tab-item sel w="86" icon="design" tx="9">Design</tab-item><tab-item w="70" icon="files" tx="11">Files</tab-item><tab-item w="13" icon="libs"></tab-item><div class="nav"><div>${arrow('l', '#b5b1ad')}</div><div>${arrow('r')}</div></div></div>`);

define('editor-area', `<style>
:host{display:flex;flex:1;min-width:0}
.split{width:6px;display:flex;align-items:flex-end;flex:none}.split i{width:4px;height:40px;margin:0 0 374px 1px;background:repeating-linear-gradient(#b5b1ad 0 1px,#fbfaf9 1px 2px)}
.col{flex:1;min-width:0;display:flex;flex-direction:column}.top{flex:1;display:flex;min-height:0}
icon-strip{width:28px;flex:none}.canvas{flex:1;display:flex;border:solid #aaa49e;border-width:0 1px 1px 2px;min-width:0;box-shadow:inset 0 2px #e6e2de;padding-top:2px}
.tabs{display:flex;height:28px;align-items:flex-start;border-top:1px solid #8f8882;margin-top:1px;border-left:1px solid #aaa}
tab-item{margin-top:-1px}
</style><div class="split"><i></i></div><div class="col"><div class="top"><icon-strip icons="select *zoomfit | stars | gatef gateb | winchip boxchip port portx | buf label | up prev next hist | two mark"></icon-strip><div class="canvas"><rtl-schematic></rtl-schematic></div></div>
<div class="tabs"><tab-item w="327" icon="doc" closable>${T(94, 'demux_rtl.vhd')}</tab-item><tab-item w="329" icon="sigma" closable>${T(206, 'Design Summary (Synthesized)')}</tab-item><tab-item sel w="326" icon="app" closable>${T(112, 'demux_rtl (RTL1)')}</tab-item><tab-item w="328" icon="doc" closable>${T(106, 'demux_test.vhd')}</tab-item></div></div>`);

define('category-dock', `<style>
:host{display:block}dock-title{height:19px}
.body{display:flex;padding:0 4px;height:107px}
.l{width:949px}.r{width:949px}h3{margin:0;font-size:13.330px;line-height:20px;height:25px;text-align:center;color:#000}.l h3{padding-left:2px}
.lists{display:flex;gap:6px}list-frame{height:77px;flex:1;min-width:0}
.sp{width:14px;padding-top:33px}.sp i{display:block;width:4px;height:40px;margin-left:5px;background:repeating-linear-gradient(#b5b1ad 0 1px,#fbfaf9 1px 2px)}
.sig{display:flex;flex:1;min-height:0}.sig>div{flex:1;min-width:0}
.vals{display:flex}.vals col-head:first-child{width:473px}.vals col-head:last-child{flex:1}
.tabs{display:flex;border-top:1px solid #8f8882;height:25px;align-items:flex-start}tab-item{margin-top:-1px;height:23px}tab-item[sel]{height:25px}
</style><dock-title>View by Category</dock-title>
<div class="body"><div class="l"><h3>${T(248, 'Design Objects of Top Level Block')}</h3><div class="lists">
<list-frame><col-head arrow="down">Instances</col-head><tree-row x="10" indent="23" icon="mod" box="plus">demux_rtl</tree-row></list-frame>
<list-frame><col-head arrow="down">Pins</col-head><tree-row x="10" indent="23" icon="mod" box="plus">demux_rtl</tree-row></list-frame>
<list-frame><div class="sig"><div><col-head arrow="down">Signals</col-head><tree-row alt x="31" indent="44" icon="net" down up="0">D_S2_AND_13_o</tree-row><tree-row x="31" indent="44" icon="net" down up="0">S0</tree-row><tree-row alt x="31" indent="44" icon="net" up="0">S1</tree-row></div><v-scroll></v-scroll></div></list-frame></div></div>
<div class="sp"><i></i></div><div class="r"><h3>${T(189.5, 'Properties: (No Selection)')}</h3><list-frame><div class="vals"><col-head arrow="up">Name</col-head><col-head>Value</col-head></div></list-frame></div></div>
<div class="tabs"><tab-item w="93" icon="console" tx="11">Console</tab-item><tab-item w="80" icon="error" tx="11">Errors</tab-item><tab-item w="102" icon="warn" tx="11">Warnings</tab-item><tab-item w="169" icon="find" tx="11">${T(126.5, 'Find in Files Results')}</tab-item><tab-item sel w="157" icon="grid" tx="10">View by Category</tab-item></div>`);

define('status-bar', `<style>:host{display:block;text-align:right;padding-right:5px;line-height:20px;padding-top:1px}</style>${T(71, '[500,2620]')}`);

define('ise-app', `<style>:host{display:flex;flex-direction:column;width:1920px;height:1080px;overflow:hidden;background:#efebe7}
.main{display:flex;height:782px;flex:none}.hs{height:4px;flex:none;padding-left:939px}.hs i{display:block;width:40px;height:4px;margin-top:-1px;background:repeating-linear-gradient(90deg,#b5b1ad 0 1px,#fbfaf9 1px 2px)}</style>
<top-bar></top-bar><title-bar></title-bar><menu-bar></menu-bar><tool-bar></tool-bar>
<div class="main"><design-dock></design-dock><editor-area></editor-area></div><div class="hs"><i></i></div>
<category-dock></category-dock><status-bar></status-bar>`);
</script>
</body>
</html>
